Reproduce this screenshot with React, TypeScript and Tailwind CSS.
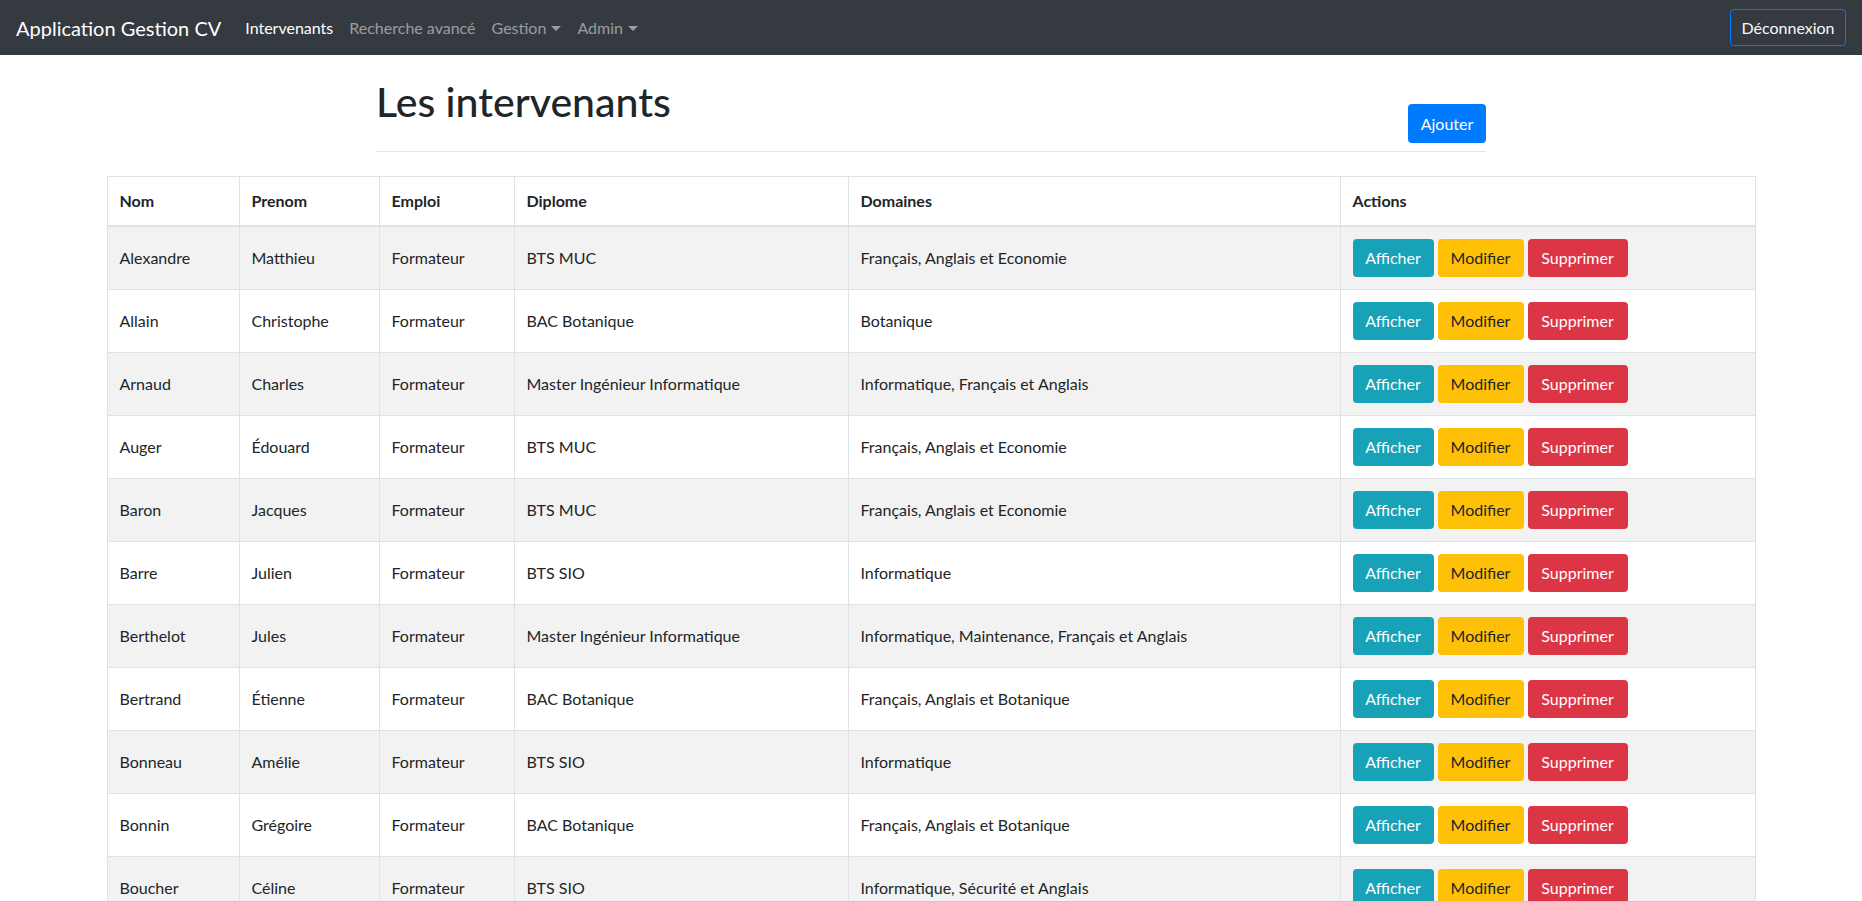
import React from 'react';

const rows = [
  ['Alexandre', 'Matthieu', 'Formateur', 'BTS MUC', 'Français, Anglais et Economie'],
  ['Allain', 'Christophe', 'Formateur', 'BAC Botanique', 'Botanique'],
  ['Arnaud', 'Charles', 'Formateur', 'Master Ingénieur Informatique', 'Informatique, Français et Anglais'],
  ['Auger', 'Édouard', 'Formateur', 'BTS MUC', 'Français, Anglais et Economie'],
  ['Baron', 'Jacques', 'Formateur', 'BTS MUC', 'Français, Anglais et Economie'],
  ['Barre', 'Julien', 'Formateur', 'BTS SIO', 'Informatique'],
  ['Berthelot', 'Jules', 'Formateur', 'Master Ingénieur Informatique', 'Informatique, Maintenance, Français et Anglais'],
  ['Bertrand', 'Étienne', 'Formateur', 'BAC Botanique', 'Français, Anglais et Botanique'],
  ['Bonneau', 'Amélie', 'Formateur', 'BTS SIO', 'Informatique'],
  ['Bonnin', 'Grégoire', 'Formateur', 'BAC Botanique', 'Français, Anglais et Botanique'],
  ['Boucher', 'Céline', 'Formateur', 'BTS SIO', 'Informatique, Sécurité et Anglais'],
  ['Brunet', 'Lucas', 'Formateur', 'BTS SIO', 'Informatique et Anglais'],
  ['Carpentier', 'Manon', 'Formateur', 'BAC Botanique', 'Botanique'],
];

const headers = ['Nom', 'Prenom', 'Emploi', 'Diplome', 'Domaines', 'Actions'];
const widths = ['w-[132px]', 'w-[140px]', 'w-[135px]', 'w-[334px]', 'w-[492px]', 'w-[415px]'];

function Caret() {
  return (
    <span className="ml-[5px] inline-block h-0 w-0 border-x-[5px] border-t-[5px] border-x-transparent border-t-current align-[3px]" />
  );
}

export default function App() {
  return (
    <div className="min-h-screen bg-white text-[#212529] font-['Segoe_UI',Lato,'Liberation_Sans',sans-serif] text-base">
      <nav className="flex h-[55px] items-center bg-[#343a40] px-4">
        <span className="mr-4 text-[20px] text-white">Application Gestion CV</span>
        <a className="px-2 text-white">Intervenants</a>
        <a className="px-2 text-white/50">Recherche avancé</a>
        <a className="px-2 text-white/50">
          Gestion
          <Caret />
        </a>
        <a className="px-2 text-white/50">
          Admin
          <Caret />
        </a>
        <button className="ml-auto h-[37px] w-[116px] rounded border border-[#007bff] text-[#f8f9fa]">Déconnexion</button>
      </nav>

      <div className="mx-auto w-[1110px]">
        <div className="mt-[23px] flex items-end justify-between">
          <h1 className="mb-[17px] text-[41px] font-medium leading-[48px]">Les intervenants</h1>
          <button className="h-[39px] w-[78px] rounded bg-[#007bff] text-white">Ajouter</button>
        </div>
        <hr className="mt-[8px] border-t border-black/10" />
      </div>

      <table className="mx-auto mt-[24px] w-[1648px] table-fixed border-collapse border border-[#dee2e6]">
        <colgroup>
          {widths.map((w, i) => (
            <col key={i} className={w} />
          ))}
        </colgroup>
        <thead>
          <tr>
            {headers.map((h) => (
              <th key={h} className="border border-b-2 border-[#dee2e6] px-3 py-3 text-left font-bold leading-6">
                {h}
              </th>
            ))}
          </tr>
        </thead>
        <tbody>
          {rows.map((r, i) => (
            <tr key={i} className={i % 2 === 0 ? 'bg-[#f2f2f2]' : 'bg-white'}>
              {r.map((c, j) => (
                <td key={j} className="border border-[#dee2e6] px-3 py-3 align-middle leading-6">
                  {c}
                </td>
              ))}
              <td className="border border-[#dee2e6] px-3 py-3 align-middle">
                <div className="flex gap-1">
                  <button className="h-[38px] w-[81px] rounded bg-[#17a2b8] text-white">Afficher</button>
                  <button className="h-[38px] w-[86px] rounded bg-[#ffc107] text-[#212529]">Modifier</button>
                  <button className="h-[38px] w-[100px] rounded bg-[#dc3545] text-white">Supprimer</button>
                </div>
              </td>
            </tr>
          ))}
        </tbody>
      </table>

      {/* bottom edge of the window */}
      <div className="fixed inset-x-0 bottom-0 h-px bg-[#c9c9c9]" />
    </div>
  );
}
